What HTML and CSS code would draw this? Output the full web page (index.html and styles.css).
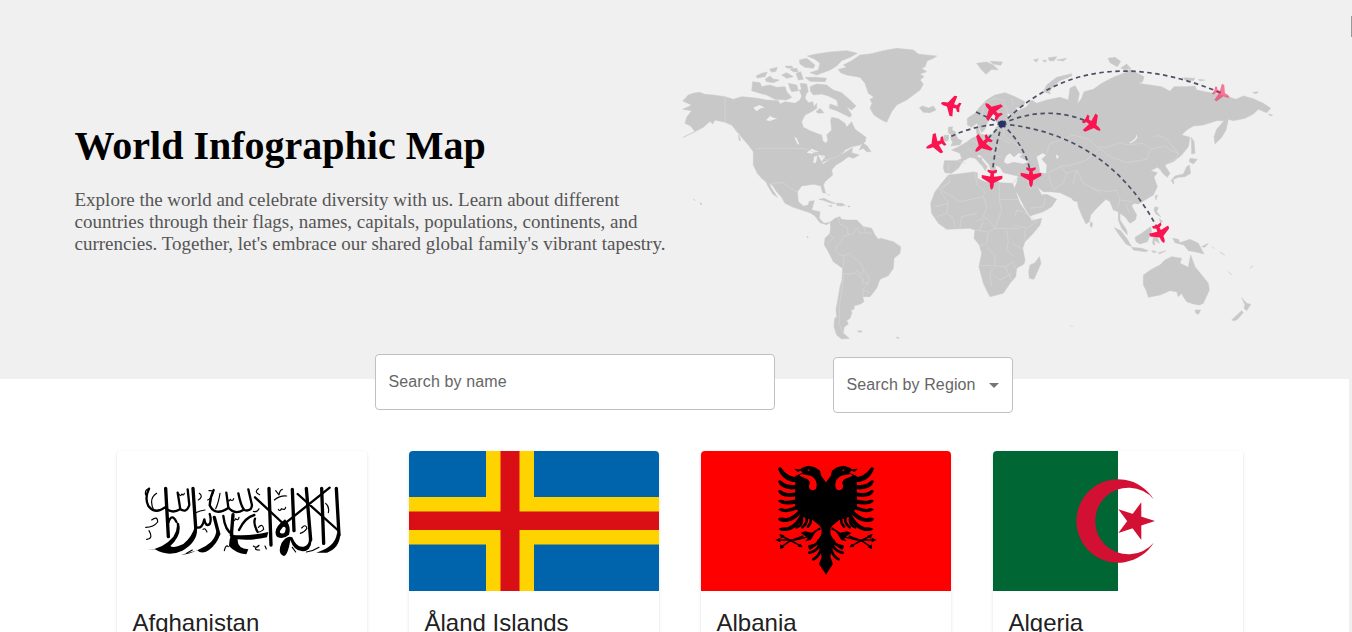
FILE: index.html
```html
<!DOCTYPE html>
<html lang="en">
<head>
<meta charset="utf-8">
<title>World Infographic Map</title>
<link rel="stylesheet" href="styles.css">
</head>
<body>
<header class="hero">
  <div class="intro">
    <h1 class="headline">World Infographic Map</h1>
    <p class="lead">Explore the world and celebrate diversity with us. Learn about different<br>countries through their flags, names, capitals, populations, continents, and<br>currencies. Together, let's embrace our shared global family's vibrant tapestry.</p>
  </div>
  <svg class="map" viewBox="670 40 610 310">
    <defs>
      <path id="plane" d="M0-32Q6-29 6-12L31 2 31 11 6 7 5 16 14 21 14 28 0 25-14 28-14 21-5 16-6 7-31 11-31 2-6-12Q-6-29 0-32Z"/>
    </defs>
    <!-- North America and Greenland -->
    <g transform="translate(670 40) scale(.33333)">
      <g class="land">
        <path d="M38 183L55 165 70 160 88 157 105 163 130 165 165 170 190 178 215 170 235 172 262 175 290 180 325 182 330 192 345 185 375 190 390 180 395 168 388 150 400 148 408 165 405 175 415 188 428 185 432 200 440 190 440 205 425 215 405 225 395 245 400 262 420 272 440 280 455 285 458 302 468 310 474 300 470 285 485 270 482 240 485 232 505 236 525 250 530 262 545 245 555 268 572 280 588 292 586 305 570 315 545 320 525 330 515 345 532 333 548 323 545 338 568 345 550 355 535 350 515 365 498 375 485 390 488 405 465 425 460 435 467 460 458 458 452 437 430 433 395 438 382 455 385 485 400 498 414 496 418 484 433 482 425 510 450 515 448 535 462 550 480 547 470 554 450 548 435 528 420 518 395 510 370 502 345 490 335 472 320 455 308 437 298 428 304 444 322 472 308 462 296 442 288 426 275 415 262 400 250 375 250 335 235 315 215 292 198 272 185 255 165 247 135 240 128 252 120 244 100 262 80 272 40 292 75 275 62 258 45 250 50 232 65 212 38 208 55 200 65 195Z"/>
        <path d="M245 152L248 125 270 128 275 140 300 135 320 142 345 140 350 155 365 172 350 180 315 178 290 165 270 160ZM355 130L380 135 385 152 365 155 360 145ZM388 60L410 55 435 75 430 85 405 82 390 72ZM412 48L440 42 480 36 530 32 562 40 540 52 515 62 500 78 480 90 440 105 420 98 445 90 450 70 435 58ZM258 108L275 100 292 96 285 110 262 114ZM285 118L300 108 310 117 328 120 310 128 290 125ZM298 88L322 82 318 94 305 97ZM335 105L350 98 370 110 350 115ZM360 88L380 85 385 95 370 95ZM345 78L365 78 370 85 350 84ZM378 100L392 95 400 118 385 120ZM405 112L440 112 470 115 465 125 420 124ZM390 130L410 132 415 155 405 165 395 150ZM420 140L440 132 470 135 490 150 515 158 540 180 558 198 545 210 530 200 545 225 540 232 520 222 500 212 478 205 480 192 505 200 500 180 475 168 455 162 430 165 422 155ZM438 215L450 205 462 218 445 220ZM568 330L578 308 592 318 603 335 590 335 580 325Z"/>
        <path d="M505 88L530 82 520 75 545 62 570 45 600 42 640 32 680 25 730 30 745 42 760 44 800 48 790 55 772 62 765 80 755 85 770 95 750 102 762 110 750 120 760 132 750 150 730 165 710 180 680 195 665 215 650 247 635 240 612 225 600 205 606 190 600 178 612 172 595 160 585 130 570 112 530 105 512 98Z"/>
        <path d="M447 478L462 475 485 486 497 490 485 490 460 481ZM500 490L515 490 526 496 512 498 500 496ZM476 497L486 497 484 500ZM534 498L540 498 539 501 534 500ZM90 488L96 492 93 495ZM70 478L76 481ZM473 463L479 465ZM205 285L212 300 208 302Z"/>
      </g>
      <path class="water" d="M250 203L268 195 284 203 272 205 260 214ZM288 241L300 228 310 233 322 235 300 243ZM373 292L380 294 388 314 382 312ZM410 338L425 326 447 336 435 335 425 341ZM430 368L432 350 442 347 438 368ZM444 344L466 348 455 365ZM455 369L486 356 478 360 460 371ZM445 170L462 175 465 195 450 185ZM378 55L375 70 395 92 382 82Z"/>
      <path class="border" d="M165 172V247L185 255 210 285M257 325H400L425 333 450 345 470 360 500 350 520 335M304 430L340 428 358 442 382 457"/>
    </g>
    <!-- South America -->
    <g transform="translate(670 190) scale(.33333)">
      <path class="land" d="M480 97L495 85 510 80 514 88 530 90 560 90 580 110 605 115 615 135 625 148 632 145 670 155 692 170 690 190 672 205 670 235 655 257 630 268 620 295 600 320 578 320 582 335 570 343 553 347 552 358 543 360 546 368 540 385 530 392 535 402 522 412 520 430 538 445 515 447 500 435 492 410 494 385 500 380 498 360 505 320 510 290 516 270 518 235 490 215 475 185 463 165 465 145 480 130 482 110ZM563 422L577 423 573 427 565 426ZM678 441L688 444 682 445ZM411 139L415 142 412 144Z"/>
      <path class="border" d="M505 85L510 103 530 110 535 135 520 140 515 155 500 168 498 182 510 195 522 197 520 232M522 197L540 190 552 205 568 215 580 235 575 255 560 240 556 250 535 252 522 250 515 300 508 345 508 400 518 430M535 135L550 130 562 112 568 130 580 128 605 130M582 112L585 128M480 135L492 143 470 162M580 240L598 262 595 280 578 300 580 318M560 252L580 268 578 280 595 278M578 300L600 308"/>
    </g>
    <!-- Europe, Asia, Africa and Oceania -->
    <g transform="translate(880 40) scale(.33333)">
      <g class="land">
        <path d="M193 362L230 362 245 356 240 340 215 330 240 318 262 305 275 295 292 288 288 268 295 262 300 282 320 286 342 280 348 262 365 252 385 245 350 247 345 232 350 215 338 215 330 235 322 248 315 268 305 278 298 262 290 250 275 262 262 255 262 235 285 220 300 200 320 180 345 165 375 158 400 168 435 185 430 200 405 203 415 212 440 200 455 180 470 190 500 180 540 172 565 180 570 145 585 137 598 160 592 192 605 175 612 155 640 148 665 130 700 112 735 98 750 88 792 110 788 125 775 130 810 135 845 140 870 154 882 140 915 140 945 138 950 150 975 155 1000 160 1050 172 1068 178 1090 168 1120 176 1150 190 1172 205 1160 218 1135 208 1120 222 1095 235 1060 242 1045 238 1038 270 1025 292 1005 312 1002 290 1010 268 1032 242 1010 242 970 255 940 258 920 270 905 285 930 292 925 320 905 345 880 365 860 372 855 378 870 400 862 412 850 402 840 388 832 382 812 392 832 398 822 412 832 440 820 465 795 480 775 492 762 490 755 498 770 525 766 540 750 550 735 530 720 520 720 540 740 570 742 585 725 565 715 540 715 515 700 510 690 485 678 478 660 495 645 510 632 525 628 545 618 552 605 525 595 500 592 485 580 482 575 475 540 458 510 455 490 455 472 440 485 465 500 463 530 478 515 500 490 515 450 528 435 505 415 465 402 448 410 430 415 408 400 405 370 398 360 382 345 375 350 400 335 400 328 375 310 355 300 345 290 345 310 365 322 380 316 392 305 375 285 355 270 352 250 362 235 385 215 400 195 398 190 385Z"/>
        <path d="M205 405L235 402 280 396 292 398 292 415 315 425 335 428 345 420 360 428 398 430 405 450 420 490 448 530 455 542 485 535 480 555 460 580 435 605 428 625 435 660 432 672 410 685 407 710 390 730 370 760 350 765 330 770 322 755 310 730 297 680 305 640 298 615 282 595 285 570 270 565 240 566 200 568 175 550 155 520 152 490 165 455 185 430ZM478 650L483 670 462 718 448 715 446 695 450 675 465 668Z"/>
        <path d="M205 262L218 260 216 270 226 275 232 295 246 302 240 314 212 318 218 308 212 295 215 285 205 278ZM192 286L206 285 204 302 190 305ZM118 203L128 198 145 204 160 198 168 210 150 218 130 217 122 208ZM290 70L320 66 340 75 355 90 335 88 318 103 305 90ZM330 64L368 66 362 76 340 72ZM460 60L475 56 470 66ZM488 60L500 62 494 67ZM505 53L530 50 522 62 508 62ZM530 60L560 55 550 63ZM490 155L500 135 530 112 575 101 575 108 540 122 520 138 508 155 512 162ZM684 55L705 52 722 64 712 80 690 68ZM722 84L740 72 752 85 735 90ZM910 113L945 115 940 122 915 120ZM955 118L975 120 960 123ZM1118 157L1135 155 1128 162ZM1165 222L1178 225 1172 228ZM300 352L306 354 303 372 298 370ZM934 292L942 305 945 340 935 342ZM930 355L952 358 940 372 928 365ZM928 375L932 400 915 410 895 412 875 420 885 408 910 402 920 380ZM873 420L882 422 880 432ZM825 468L832 465 828 480ZM825 500L835 503 830 515 842 530 828 522 822 510ZM838 535L848 545 842 550ZM765 592L785 580 812 560 815 575 802 605 780 612 768 605ZM820 585L840 580 832 592 838 610 822 600 825 615 818 612ZM578 495L578 495ZM632 545L638 550 635 562 630 558ZM703 563L722 572 740 595 755 620 738 612 720 588ZM755 622L785 625 805 632 795 635 760 630ZM815 632L830 635 820 638ZM835 638L858 632 838 642ZM878 595L895 598 900 608 930 598 955 610 972 642 945 635 925 632 912 615 885 608ZM965 620L985 610 975 622ZM1020 635L1034 645 1025 640ZM998 620L1002 626ZM1045 695L1055 704ZM1110 685L1118 678 1112 682Z"/>
        <path d="M790 705L815 688 840 675 855 660 875 650 905 655 900 670 925 682 932 645 945 680 965 705 985 730 988 750 970 790 958 795 940 792 920 785 910 770 905 760 895 770 890 755 870 752 840 765 805 772 798 750 790 735ZM945 810L962 810 955 823 948 820ZM1085 773L1100 790 1112 793 1100 812 1092 805 1095 795ZM1055 840L1085 812 1090 818 1070 840 1060 842ZM570 858L580 859"/>
      </g>
      <path class="water" d="M372 366Q376 345 390 340L402 352 415 340 428 342 418 350 445 365 430 371 400 366 382 372ZM470 350L488 340 498 345 485 358 500 375 498 400 480 398 478 380ZM528 343L537 350 530 358ZM748 308Q768 300 770 283L772 292Q768 303 752 310ZM450 590L459 588 455 603 450 601ZM382 220L392 225 385 232Z"/>
      <path class="border" d="M305 225L315 190 345 175 370 180M370 180L385 220M395 175L400 195M278 300L300 315 290 338M310 290L315 315 340 325 360 320M345 280L370 300 390 310M230 362L258 370M262 320L275 335M205 370V395M370 260L372 290 405 310 425 325M340 325L335 345 365 352M500 340L510 310 560 295 575 285 600 290 630 300 650 320 680 322 720 308 745 315 790 310 815 328 855 318 870 330 895 340 890 355 870 365M660 325L690 350 740 368 800 358 812 328M820 290Q850 280 870 310L895 340M500 400L540 380 575 375 620 360 660 325M505 405L520 450M540 380L560 400 550 430 520 450M560 400L590 390 610 430 650 450 690 455 710 450 720 480 755 485M590 390L580 430M640 445L660 460M720 480L712 505M735 490L750 520M415 400L440 410 450 445 470 440M400 430L415 408M450 505L490 500 495 475"/>
      <path class="border" d="M205 405L210 425 165 455M185 450L240 485 310 470 315 455 292 435 285 400M210 425L180 452 205 490 165 500M358 428V478L365 510 345 565M310 470L320 500 310 530 325 540 345 565 420 565M358 478H415M405 530L410 510 430 515 470 545 440 565 420 560 400 555M300 570L310 540M345 565L325 575 320 610 298 618M380 570L385 605 380 630 405 650M320 622L345 645V675M300 677H340L375 680 400 665 405 685M345 680L330 700 335 740M340 705L360 720 395 700M375 680L395 720M170 530L200 520 220 535 225 565M240 566L245 530 290 520M205 490L200 520M285 570L320 575M285 545L310 535M435 570V600M395 610L425 625"/>
    </g>
    <!-- Flight paths -->
    <g class="route">
      <path d="M1002 124Q1088 37 1221 93M1002 124Q1047 103 1091 123M1002 124Q1110 134 1160 233M1002 124Q1026 146 1031 175M1002 124Q994 150 992 178M1002 124Q970 126 948 138M1002 124Q993 133 983 144M1002 124L976 112"/>
    </g>
    <circle class="hub" cx="1002" cy="124" r="3.5"/>
    <g class="planes">
      <use href="#plane" transform="translate(951.3 105.5) scale(.333) rotate(-76)"/>
      <use href="#plane" transform="translate(936 144) scale(.333) rotate(-112)"/>
      <use href="#plane" transform="translate(993 111) scale(.333) rotate(-45)"/>
      <use href="#plane" transform="translate(983 144) scale(.333) rotate(-135)"/>
      <use href="#plane" transform="translate(992 179) scale(.333) rotate(182)"/>
      <use href="#plane" transform="translate(1031 176.5) scale(.333) rotate(180)"/>
      <use href="#plane" transform="translate(1092 124) scale(.333) rotate(128)"/>
      <use href="#plane" transform="translate(1160 233) scale(.333) rotate(157)"/>
      <use class="faded" href="#plane" transform="translate(1221 93.3) scale(.29) rotate(115)"/>
    </g>
  </svg>
</header>
<main class="content">
  <div class="filters">
    <div class="field field-name">Search by name</div>
    <div class="field field-region">Search by Region
      <svg class="caret" viewBox="0 0 10 5"><path d="M0 0h10L5 5z"/></svg>
    </div>
  </div>
  <div class="cards">
    <article class="card">
      <svg class="flag" viewBox="0 0 250 140">
        <g class="script" transform="translate(-12 -11) scale(.33333)">
          <path class="sweep" d="M128 330Q175 326 205 290 220 268 214 245L222 250Q232 285 196 318 205 326 235 312 262 290 270 258L276 262Q280 305 232 332 190 352 150 328ZM228 344Q290 332 318 306 334 290 336 262L346 282Q336 312 312 330 290 345 276 330 258 342 228 344ZM378 284Q430 290 490 276L486 292Q440 302 398 298 396 326 430 328L424 343Q392 340 372 318 372 300 378 284ZM516 290Q500 268 540 238 560 258 552 284 534 300 516 290ZM528 280Q542 284 542 264 536 256 530 266 520 276 528 280ZM556 300Q548 348 536 348 516 340 530 308 546 284 562 292 574 324 596 320 612 316 612 296L620 300Q618 334 592 334 566 332 556 300ZM634 338Q690 322 696 280L706 282Q704 324 666 338Z"/>
          <path class="thick" d="M182 145L190 290M264 145L272 262M492 145L498 315M562 148L567 272M604 145L617 300M650 145L656 310M694 145L702 285M328 232L341 282M384 224L379 286"/>
          <path class="mid" d="M578 162L698 270M674 143L540 250M450 172L536 252M190 248Q200 218 214 245M274 262Q292 268 298 238 302 262 314 252 320 240 314 222M430 148L441 196Q438 216 418 210 408 200 400 160M415 210Q388 226 370 202L364 158M370 204Q330 230 314 196 316 170 326 150M248 148L253 195Q245 220 226 208L218 158M225 208Q200 224 180 202 150 224 130 198 118 174 132 146M448 225Q420 232 402 270M450 236Q444 252 458 276M355 228Q360 272 382 282"/>
          <path class="fine" d="M122 165Q118 150 132 146M283 160Q296 170 280 180M300 210Q285 212 272 218M140 240Q158 226 158 246 146 262 122 262M132 272Q146 296 125 298M222 162Q228 172 230 162 236 168 238 160M368 178Q370 188 376 178 382 186 386 176M382 236Q386 248 392 236 400 244 402 232M445 318Q456 326 462 316 440 330 464 330M480 318L484 327M512 152Q520 162 522 165 524 150 532 148M508 180Q525 166 545 168M520 208Q524 216 530 206 540 212 542 202M590 264Q602 250 606 265 600 276 586 280M604 336Q624 334 642 322M662 190Q674 200 670 218M358 332Q362 312 370 320M562 322L572 336M294 268Q300 262 306 276M312 152Q326 150 324 160 318 176 308 180M345 160Q340 190 332 206M155 160Q130 176 146 210M460 146Q446 156 464 164M460 262Q474 248 476 268 466 276 462 276M445 214Q456 218 462 206M245 340L262 330"/>
        </g>
      </svg>
      <h2 class="name">Afghanistan</h2>
    </article>
    <article class="card">
      <svg class="flag" viewBox="0 0 250 140">
        <path fill="#0064ad" d="M0 0h250v140H0z"/>
        <path fill="#ffd300" d="M77 0h48v46h125v47.500H125V140H77V93.500H0V46h77z"/>
        <path fill="#da0e15" d="M91.500 0h19v60.500H250v18.500H110.500V140h-19V79H0V60.500h91.500z"/>
      </svg>
      <h2 class="name">Åland Islands</h2>
    </article>
    <article class="card">
      <svg class="flag" viewBox="0 0 250 140">
        <path fill="#f00" d="M0 0h250v140H0z"/>
        <defs>
          <g id="half-eagle">
            <path d="M259 128L244 108 240 92 225 82 205 77 190 82 180 88 163 86 172 95 182 92 188 98 178 103 166 108 165 195 178 222 200 237 215 238 240 258 245 268 232 290 230 308 240 330 245 350 237 372 259 405Z"/>
            <path d="M114 86Q120 78 126 86 140 108 172 112V126Q130 128 114 86ZM114 124Q120 116 128 126 142 138 172 134V147Q124 154 114 124ZM114 153Q120 146 130 155 145 162 172 156V168Q124 178 114 153ZM114 182Q122 176 134 182 150 184 174 176V190Q126 200 114 182ZM114 209Q122 202 136 207 156 206 176 192L182 204Q134 226 114 209ZM114 236Q122 230 138 235 160 230 180 206L188 214Q160 252 128 245 116 244 114 236ZM116 266Q124 260 142 262 170 252 184 216L194 224Q178 264 142 273 120 275 116 266Z"/>
            <path class="barb" d="M170 262Q188 255 186 235M187 262Q202 250 200 235M204 260Q213 250 213 238M208 319Q225 318 236 305M208 338Q230 335 238 315M220 358Q236 350 242 330M210 325L235 308"/>
            <path d="M240 262L215 278 195 274 182 279 204 293 196 304 212 300 224 283 244 275Z"/>
            <path class="arrow" d="M112 300H165L205 290M122 322L150 303 190 288M125 288L155 303 184 319"/>
            <path d="M106 300l15-7v14zM120 328l1-15 12 9zM118 282l15 4-9 10zM188 322l-15-2 8-9z"/>
            <path fill="#f00" d="M184 102L212 107Q232 118 230 138Q229 151 217 151Q206 149 207 136Q213 126 203 118L178 107ZM203 88l7 2-6 4zM245 269Q246 292 230 301Q216 302 218 291Q226 270 245 269Z"/>
          </g>
        </defs>
        <g transform="translate(39 -11) scale(.33333)">
          <use href="#half-eagle"/>
          <use href="#half-eagle" transform="translate(516 0) scale(-1 1)"/>
        </g>
      </svg>
      <h2 class="name">Albania</h2>
    </article>
    <article class="card">
      <svg class="flag" viewBox="0 0 250 140">
        <path fill="#fff" d="M0 0h250v140H0z"/>
        <path fill="#063" d="M0 0h125v140H0z"/>
        <path fill="#d21034" d="M160.700 48.300A41.700 41.700 0 1 0 160.700 91.700A33.300 33.300 0 1 1 160.700 48.300ZM162 70L125.300 58.300 148.300 89V51.300L125.300 82Z"/>
      </svg>
      <h2 class="name">Algeria</h2>
    </article>
  </div>
</main>
<div class="scroll-thumb"></div>
</body>
</html>
```
FILE: styles.css
```css
* { box-sizing: border-box; }
html { overflow: hidden; }
body {
  margin: 0;
  height: 632px;
  overflow: hidden;
  background: #f0f0f0;
  font-family: "Liberation Sans", Arial, sans-serif;
}
.hero {
  display: flex;
  height: 379px;
  padding: 40px 0 0 74.500px;
}
.intro { width: 595.500px; padding-top: 83px; flex: none; }
.headline {
  margin: 0;
  font: bold 40px/46px "Liberation Serif", "Times New Roman", serif;
  color: #000;
  white-space: nowrap;
}
.lead {
  margin: 20px 0 0;
  font: 19px/22px "Liberation Serif", "Times New Roman", serif;
  color: #555;
  white-space: nowrap;
}
.map { width: 610px; height: 310px; flex: none; }
.land { fill: #c8c8c8; stroke: #c8c8c8; stroke-width: 1.5; stroke-linejoin: round; }
.water { fill: #f0f0f0; }
.border { fill: none; stroke: #d6d6d6; stroke-width: 2; stroke-linejoin: round; }
.route { fill: none; stroke: #4b5064; stroke-width: 1.7; stroke-dasharray: 4.5 3.5; }
.hub { fill: #27306b; }
.planes { fill: #fa1450; }
.faded { opacity: .55; }

.content {
  width: 1349px;
  height: 253px;
  overflow: hidden;
  background: #fff;
}
.filters {
  display: flex;
  gap: 58px;
  height: 72px;
  padding-left: 375px;
  align-items: flex-start;
}
.field {
  position: relative;
  top: 0;
  display: flex;
  align-items: center;
  height: 56px;
  padding: 0 13px 0 12.500px;
  border: 1px solid #c0c0c0;
  border-radius: 4px;
  background: #fff;
  color: #666;
  font-size: 16px;
  letter-spacing: .12px;
  white-space: nowrap;
}
.field-name { width: 400px; margin-top: -25px; }
.field-region { width: 180px; margin-top: -22px; justify-content: space-between; }
.content { overflow: visible; }
.caret { width: 10px; height: 5px; fill: #757575; }
.cards { display: flex; gap: 42px; height: 181px; padding-left: 117px; }
.card {
  width: 250px;
  height: 260px;
  flex: none;
  overflow: hidden;
  border-radius: 4px;
  background: #fff;
  box-shadow: 0 1px 3px rgba(0, 0, 0, .14);
}
.flag { display: block; width: 250px; height: 140px; }
.name {
  margin: 0;
  padding: 16px 16px 0 15.500px;
  font-size: 24px;
  font-weight: 400;
  line-height: 32px;
  color: #212121;
}
.script { fill: none; stroke: #000; stroke-linecap: round; stroke-linejoin: round; }
.sweep { fill: #000; fill-rule: evenodd; stroke: none; }
.thick { stroke-width: 10; }
.mid { stroke-width: 7; }
.fine { stroke-width: 3.500; }
.barb { fill: none; stroke: #000; stroke-width: 8; stroke-linecap: round; }
.arrow { fill: none; stroke: #000; stroke-width: 4.500; }
.scroll-thumb {
  position: absolute;
  top: 16px;
  right: 0;
  width: 1px;
  height: 21px;
  background: #999;
}
```
